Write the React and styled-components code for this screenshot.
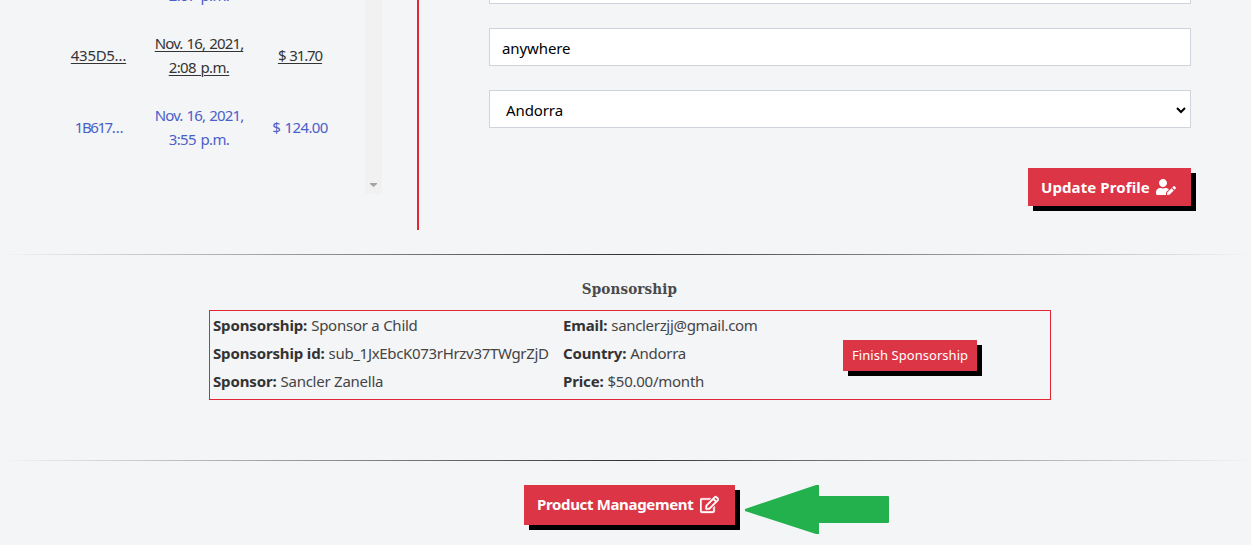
import React from 'react';
import styled, { createGlobalStyle } from 'styled-components';
import { FaUserEdit, FaRegEdit } from 'react-icons/fa';

const GlobalStyle = createGlobalStyle`
  *, *::before, *::after { box-sizing: border-box; }
  body {
    margin: 0;
    background: #f4f5f7;
    color: #444;
    font: 15px/24px "Noto Sans", "Open Sans", sans-serif;
  }
`;

const Page = styled.main`
  height: 545px;
  overflow: hidden;
`;

const Account = styled.section`
  display: flex;
  height: 230px;
`;

const OrdersPanel = styled.div`
  width: 419px;
  padding-left: 50px;
  border-right: 2px solid #e32636;
`;

const OrdersScroller = styled.div`
  display: flex;
  justify-content: space-between;
  width: 332px;
  height: 194px;
  overflow: hidden;
`;

const Orders = styled.div`
  margin-top: -53px;
`;

const OrderRow = styled.a`
  display: grid;
  grid-template-columns: 97px 104px 98px;
  align-items: center;
  height: 72px;
  text-align: center;
  white-space: nowrap;
  color: ${(p) => (p.$active ? '#343434' : '#4a5fc9')};
  text-decoration: ${(p) => (p.$active ? 'underline' : 'none')};
  text-decoration-thickness: 1px;
  text-underline-offset: 2px;
`;

const Label = styled.span`
  letter-spacing: ${(p) => p.$track || 0}px;
  word-spacing: ${(p) => p.$gap || 0}px;
  margin-top: ${(p) => p.$lift || 0}px;
`;

const Scrollbar = styled.div`
  display: flex;
  align-items: flex-end;
  justify-content: center;
  width: 17px;
  padding-bottom: 7px;
  background: #f1f1f1;
`;

const ProfileForm = styled.form`
  display: flex;
  flex-direction: column;
  gap: 24px;
  width: 772px;
  margin-top: -34px;
  padding-left: 70px;
`;

const Field = styled.div`
  display: flex;
  flex: none;
  align-items: center;
  justify-content: space-between;
  height: 38px;
  padding: 2px 4px 0 ${(p) => (p.$select ? 16 : 12)}px;
  background: #fff;
  border: 1px solid #ced4da;
  color: #000;
  letter-spacing: -0.1px;
`;

const Button = styled.button`
  display: inline-flex;
  align-items: center;
  flex: none;
  gap: ${(p) => p.$gap || 6}px;
  width: ${(p) => p.$width}px;
  height: ${(p) => p.$height}px;
  padding: 0 0 0 ${(p) => (p.$small ? 9 : 13)}px;
  border: 0;
  background: #dc3545;
  box-shadow: 5px 5px 0 #000;
  color: #fff;
  font-family: inherit;
  font-size: ${(p) => (p.$small ? 13 : 15)}px;
  font-weight: ${(p) => (p.$small ? 400 : 700)};
  line-height: 24px;
  white-space: nowrap;
`;

const SubmitButton = styled(Button)`
  align-self: flex-end;
  margin-top: 16px;
`;

const Divider = styled.hr`
  height: 1px;
  margin: ${(p) => p.$top || 0}px 0 0;
  border: 0;
  background: linear-gradient(to right, transparent, #333, transparent);
`;

const Sponsorships = styled.section`
  display: flex;
  flex-direction: column;
  align-items: center;
  height: 205px;
  padding-top: 22px;
`;

const Title = styled.h2`
  margin: 0 0 0 8px;
  color: #4a4a4a;
  font: 700 15px/24px "DejaVu Serif Condensed", "DejaVu Serif", serif;
  font-stretch: condensed;
  letter-spacing: 0.15px;
`;

const SponsorCard = styled.div`
  display: grid;
  grid-template-columns: 350px 280px 1fr;
  align-items: center;
  width: 842px;
  height: 90px;
  margin: 9px 0 0 9px;
  padding-left: 3px;
  border: 1px solid #e32636;
`;

const Details = styled.dl`
  margin: 0;
  padding-bottom: 4px;
  line-height: 28px;
`;

const Detail = styled.div`
  display: flex;
  gap: 4px;
  white-space: nowrap;
`;

const Term = styled.dt`
  color: #333;
  font-weight: 700;
  letter-spacing: -0.15px;
`;

const Value = styled.dd`
  margin: 0;
  letter-spacing: ${(p) => p.$track || 0}px;
`;

const Management = styled.section`
  display: flex;
  padding: 24px 0 0 524px;
`;

const EditIcon = styled(FaRegEdit)`
  margin-top: -2px;
  stroke: currentColor;
  stroke-width: 10px;
`;

const Arrow = styled.svg`
  flex: none;
  margin-left: 9px;
`;

const orders = [
  { time: '2:07 p.m.' },
  { id: ['435D5…', -0.3], date: 'Nov. 16, 2021,', time: '2:08 p.m.', price: ['$ 31.70', -1.1], active: true },
  { id: ['1B617…', -1.4], date: 'Nov. 16, 2021,', time: '3:55 p.m.', price: ['$ 124.00', -0.6] },
];

const plan = [
  ['Sponsorship:', 'Sponsor a Child', -0.25],
  ['Sponsorship id:', 'sub_1JxEbcK073rHrzv37TWgrZjD', -0.32],
  ['Sponsor:', 'Sancler Zanella', -0.25],
];

const contact = [
  ['Email:', 'sanclerzjj@gmail.com', -0.32],
  ['Country:', 'Andorra', -0.3],
  ['Price:', '$50.00/month', -0.25],
];

const Tracked = ({ text }) => (
  <Label $track={text?.[1]} $gap={1}>
    {text?.[0]}
  </Label>
);

const DetailList = ({ items }) => (
  <Details>
    {items.map(([term, value, track]) => (
      <Detail key={term}>
        <Term>{term}</Term>
        <Value $track={track}>{value}</Value>
      </Detail>
    ))}
  </Details>
);

export default function App() {
  return (
    <Page>
      <GlobalStyle />
      <Account>
        <OrdersPanel>
          <OrdersScroller>
            <Orders>
              {orders.map((order) => (
                <OrderRow key={order.time} $active={order.active}>
                  <Tracked text={order.id} />
                  <div>
                    <Label $track={-0.85} $gap={1}>{order.date}</Label>
                    <br />
                    <Label $track={-0.6} $gap={1}>{order.time}</Label>
                  </div>
                  <Tracked text={order.price} />
                </OrderRow>
              ))}
            </Orders>
            <Scrollbar>
              <svg width="7" height="4" viewBox="0 0 7 4">
                <path d="M0 0h7v1L3.5 4 0 1z" fill="#a3a3a3" />
              </svg>
            </Scrollbar>
          </OrdersScroller>
        </OrdersPanel>
        <ProfileForm>
          <Field />
          <Field>anywhere</Field>
          <Field $select>
            Andorra
            <svg width="10" height="7" viewBox="0 0 10 7" fill="none" stroke="#000" strokeWidth="2">
              <path d="M1 1l4 4 4-4" />
            </svg>
          </Field>
          <SubmitButton type="button" $width={163} $height={38}>
            <Label $track={0.1}>Update Profile</Label>
            <FaUserEdit size={20} />
          </SubmitButton>
        </ProfileForm>
      </Account>
      <Divider $top={24} />
      <Sponsorships>
        <Title>Sponsorship</Title>
        <SponsorCard>
          <DetailList items={plan} />
          <DetailList items={contact} />
          <Button type="button" $small $width={134} $height={31}>
            <Label $track={0.05}>Finish Sponsorship</Label>
          </Button>
        </SponsorCard>
      </Sponsorships>
      <Divider />
      <Management>
        <Button type="button" $width={211} $height={40} $gap={7}>
          <Label $track={-0.35} $lift={-2}>Product Management</Label>
          <EditIcon size={19} />
        </Button>
        <Arrow width="146" height="50" viewBox="0 0 146 50">
          <path d="M1 24 72 0h3v11h69q1 0 1 1v25q0 1-1 1H75v11h-3L1 26z" fill="#22b14c" />
        </Arrow>
      </Management>
    </Page>
  );
}
